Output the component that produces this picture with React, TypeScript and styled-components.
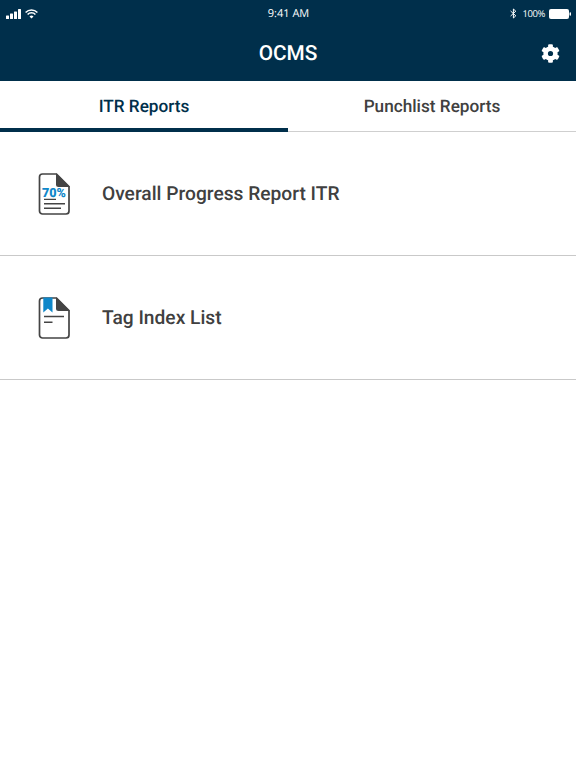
import React from "react";
import styled, { createGlobalStyle } from "styled-components";

const Global = createGlobalStyle`
  html, body { margin: 0; padding: 0; background: #fff; }
  body { font-family: Roboto, "Liberation Sans", sans-serif; text-rendering: geometricPrecision; }
`;

const Page = styled.div`
  width: 576px;
  height: 768px;
  overflow: hidden;
  background: #fff;
  display: flex;
  flex-direction: column;
`;

const Header = styled.header`
  background: #002f4b;
  height: 81px;
  color: #fff;
  display: flex;
  flex-direction: column;
`;

const StatusBar = styled.div`
  height: 27px;
  padding: 0 5px 0 6px;
  display: grid;
  grid-template-columns: 1fr auto 1fr;
  align-items: center;
  font-family: "Open Sans", "Liberation Sans", sans-serif;
  font-size: 11px;
`;

const StatusGroup = styled.div<{ $end?: boolean }>`
  display: flex;
  align-items: center;
  gap: 4px;
  justify-content: ${(p) => (p.$end ? "flex-end" : "flex-start")};
`;

const Percent = styled.span`
  font-size: 9.5px;
  letter-spacing: -0.4px;
  margin-left: 1px;
`;

const NavBar = styled.div`
  flex: 1;
  padding: 0 16px;
  display: grid;
  grid-template-columns: 1fr auto 1fr;
  align-items: center;
`;

const AppTitle = styled.h1`
  margin: 0;
  font-size: 20.8px;
  font-weight: 500;
  grid-column: 2;
`;

const Gear = styled.svg`
  justify-self: end;
  width: 19px;
  height: 19px;
  margin: 0 0.5px 1px 0;
`;

const Tabs = styled.nav`
  height: 51px;
  display: flex;
  box-shadow: inset 0 -1px 0 #cfcfcf;
`;

const Tab = styled.div<{ $active?: boolean }>`
  flex: 1;
  display: flex;
  align-items: center;
  justify-content: center;
  padding-top: 5px;
  font-size: 17.2px;
  font-weight: 500;
  color: ${(p) => (p.$active ? "#002f4b" : "#404040")};
  border-bottom: 4px solid ${(p) => (p.$active ? "#002f4b" : "transparent")};
`;

const Row = styled.div`
  height: 124px;
  box-sizing: border-box;
  display: flex;
  align-items: center;
  padding-left: 36px;
  gap: 30px;
  border-bottom: 1px solid #c9c9c9;
`;

const RowIcon = styled.svg`
  width: 36px;
  height: 44px;
  flex: none;
`;

const RowLabel = styled.span`
  font-size: 19.2px;
  font-weight: 500;
  color: #404040;
`;

const DocBase = () => (
  <>
    <path d="M6.5 2 H20.5 L33 14.5 V39 a3 3 0 0 1 -3 3 H6.5 a3 3 0 0 1 -3 -3 V5 a3 3 0 0 1 3 -3 Z" fill="#fff" stroke="#444" strokeWidth="1.7" />
    <path d="M20 1.2 L33.9 15 H22.5 a2.5 2.5 0 0 1 -2.5 -2.5 Z" fill="#444" />
  </>
);

export default function App() {
  return (
    <Page>
      <Global />
      <Header>
        <StatusBar>
          <StatusGroup>
            <svg width="15" height="10" viewBox="0 0 15 10" fill="#fff">
              <rect x="0" y="6.5" width="3" height="3.5" rx="0.5" />
              <rect x="4" y="4.5" width="3" height="5.5" rx="0.5" />
              <rect x="8" y="2.5" width="3" height="7.5" rx="0.5" />
              <rect x="12" y="0" width="3" height="10" rx="0.5" />
            </svg>
            <svg width="13" height="10" viewBox="0 0 13 10" fill="none" stroke="#fff" strokeWidth="1.5">
              <path d="M0.6 3.4 a8.2 8.2 0 0 1 11.8 0" />
              <path d="M2.6 5.5 a5.4 5.4 0 0 1 7.8 0" />
              <path d="M6.5 9.6 L4.5 7.5 a2.8 2.8 0 0 1 4 0 Z" fill="#fff" stroke="none" />
            </svg>
          </StatusGroup>
          <span>9:41 AM</span>
          <StatusGroup $end>
            <svg width="7" height="11" viewBox="0 0 7 11" fill="none" stroke="#fff" strokeWidth="1">
              <path d="M0.6 3 L5.8 7.8 L3.4 10 V1 L5.8 3.2 L0.6 8" />
            </svg>
            <Percent>100%</Percent>
            <svg width="22" height="10" viewBox="0 0 22 10" fill="#fff">
              <rect x="0" y="0" width="20" height="10" rx="2" />
              <rect x="20.5" y="3.2" width="1.5" height="3.6" rx="0.7" />
            </svg>
          </StatusGroup>
        </StatusBar>
        <NavBar>
          <AppTitle>OCMS</AppTitle>
          <Gear viewBox="0 0 512 512" fill="#fff" fillRule="evenodd">
            <path d="M487.4 315.7l-42.6-24.6c4.3-23.2 4.3-47 0-70.2l42.6-24.6c4.9-2.8 7.1-8.6 5.5-14-11.1-35.6-30-67.8-54.7-94.6-3.8-4.1-10-5.1-14.8-2.3L380.8 110c-17.9-15.4-38.5-27.3-60.8-35.1V25.8c0-5.6-3.9-10.5-9.4-11.7-36.7-8.2-74.3-7.8-109.2 0-5.5 1.2-9.4 6.1-9.4 11.7V75c-22.2 7.9-42.8 19.8-60.8 35.1L88.7 85.5c-4.9-2.8-11-1.9-14.8 2.3-24.7 26.7-43.6 58.9-54.7 94.6-1.7 5.4.6 11.2 5.5 14L67.3 221c-4.3 23.2-4.3 47 0 70.2l-42.6 24.6c-4.9 2.8-7.1 8.6-5.5 14 11.1 35.6 30 67.8 54.7 94.6 3.8 4.1 10 5.1 14.8 2.3l42.6-24.6c17.9 15.4 38.5 27.3 60.8 35.1v49.2c0 5.6 3.9 10.5 9.4 11.7 36.7 8.2 74.3 7.8 109.2 0 5.5-1.2 9.4-6.1 9.4-11.7v-49.2c22.2-7.9 42.8-19.8 60.8-35.1l42.6 24.6c4.9 2.8 11 1.9 14.8-2.3 24.7-26.7 43.6-58.9 54.7-94.6 1.5-5.5-.7-11.3-5.6-14.1zM256 326a70 70 0 1 1 0-140 70 70 0 1 1 0 140z" />
          </Gear>
        </NavBar>
      </Header>
      <Tabs>
        <Tab $active>ITR Reports</Tab>
        <Tab>Punchlist Reports</Tab>
      </Tabs>
      <Row>
        <RowIcon viewBox="0 0 36 44">
          <DocBase />
          <text x="18" y="24.6" textAnchor="middle" fontFamily="Roboto, sans-serif" fontWeight="900" fontSize="12.6" fill="#0f87c9">70%</text>
          <path d="M8 27.4 H20 M8 31.8 H29 M8 36.2 H25" stroke="#444" strokeWidth="1.4" />
        </RowIcon>
        <RowLabel>Overall Progress Report ITR</RowLabel>
      </Row>
      <Row>
        <RowIcon viewBox="0 0 36 44">
          <DocBase />
          <path d="M7.3 1.5 H16.5 V16.5 L11.9 12.6 L7.3 16.5 Z" fill="#0f87c9" />
          <path d="M8 20.5 H28 M8 26.2 H16.5" stroke="#444" strokeWidth="1.4" />
        </RowIcon>
        <RowLabel>Tag Index List</RowLabel>
      </Row>
    </Page>
  );
}
